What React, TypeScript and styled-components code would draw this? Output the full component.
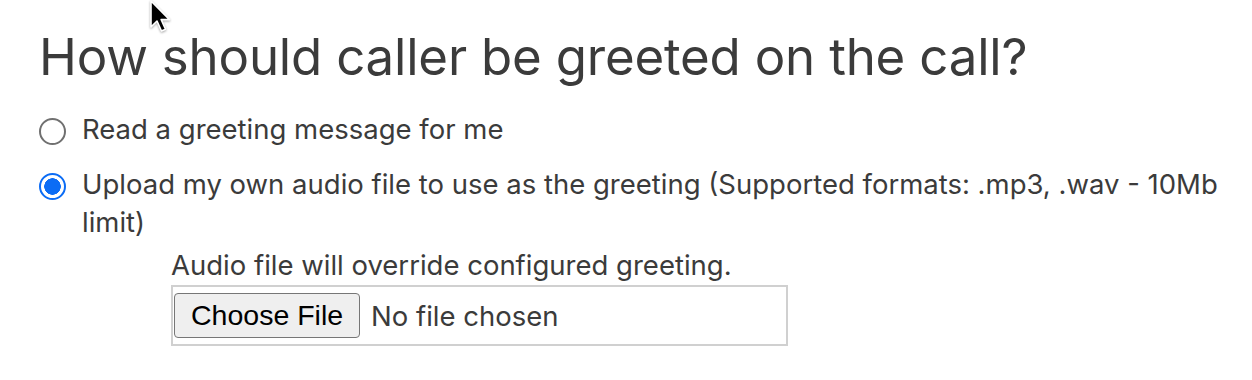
import React from "react";
import styled, { createGlobalStyle } from "styled-components";

const GlobalStyle = createGlobalStyle`
  html, body {
    margin: 0;
    padding: 0;
    background: #fff;
  }
  body {
    font-family: Inter, "Noto Sans", sans-serif;
    color: #3b3b3b;
  }
`;

export default function App() {
  return (
    <>
      <GlobalStyle />
      <Page>
        <Cursor viewBox="0 0 24 36" aria-hidden>
          <path
            d="M2 1 L2 27 L8 21 L12.5 31 L16.5 29.2 L12.2 19.6 L20.5 19.6 Z"
            fill="#000"
            stroke="#fff"
            strokeWidth="1.6"
            strokeLinejoin="round"
          />
        </Cursor>
        <Heading>How should caller be greeted on the call?</Heading>
        <Options>
          <Option>
            <Radio type="radio" name="greeting" />
            <Label>Read a greeting message for me</Label>
          </Option>
          <Option>
            <Radio type="radio" name="greeting" defaultChecked />
            <Label>
              Upload my own audio file to use as the greeting (Supported formats: .mp3, .wav - 10Mb limit)
            </Label>
          </Option>
        </Options>
        <Upload>
          <Hint>Audio file will override configured greeting.</Hint>
          <FileBox>
            <ChooseButton type="button">Choose File</ChooseButton>
            <FileName>No file chosen</FileName>
          </FileBox>
        </Upload>
      </Page>
    </>
  );
}

const Page = styled.div`
  position: relative;
  width: 1252px;
  height: 380px;
  padding: 25px 20px 0 39px;
  box-sizing: border-box;
  overflow: hidden;
`;

const Cursor = styled.svg`
  position: absolute;
  left: 149px;
  top: 0;
  width: 24px;
  height: 36px;
  filter: drop-shadow(0 1px 1px rgba(0, 0, 0, 0.35));
`;

const Heading = styled.h1`
  margin: 0 0 21px;
  font-size: 51px;
  font-weight: 400;
  line-height: 64px;
  letter-spacing: -0.2px;
  color: #3b3b3b;
`;

const Options = styled.div`
  display: flex;
  flex-direction: column;
  gap: 17px;
`;

const Option = styled.label`
  display: flex;
  align-items: flex-start;
  gap: 16px;
`;

const Radio = styled.input`
  appearance: none;
  flex: none;
  margin: 8px 0 0;
  width: 27px;
  height: 27px;
  border-radius: 50%;
  border: 2px solid #707070;
  box-sizing: border-box;
  background: #fff;

  &:checked {
    border: 2.5px solid #0b6cf5;
    background: radial-gradient(circle, #0b6cf5 0 8px, #fff 8.5px);
  }
`;

const Label = styled.span`
  font-size: 27.5px;
  line-height: 38px;
  color: #3b3b3b;
`;

const Upload = styled.div`
  margin: 5px 0 0 132px;
  display: flex;
  flex-direction: column;
  gap: 1px;
`;

const Hint = styled.div`
  font-size: 27.5px;
  line-height: 38px;
  color: #3b3b3b;
`;

const FileBox = styled.div`
  display: flex;
  align-items: center;
  gap: 11px;
  width: 617px;
  height: 61px;
  box-sizing: border-box;
  padding: 0 1px;
  border: 2px solid #d0d0d0;
`;

const ChooseButton = styled.button`
  height: 45px;
  padding: 0 16px;
  font-family: "Liberation Sans", Arial, sans-serif;
  font-size: 28.5px;
  color: #000;
  background: #efefef;
  border: 1.5px solid #767676;
  border-radius: 4px;
`;

const FileName = styled.span`
  font-size: 27.5px;
  color: #3b3b3b;
`;
